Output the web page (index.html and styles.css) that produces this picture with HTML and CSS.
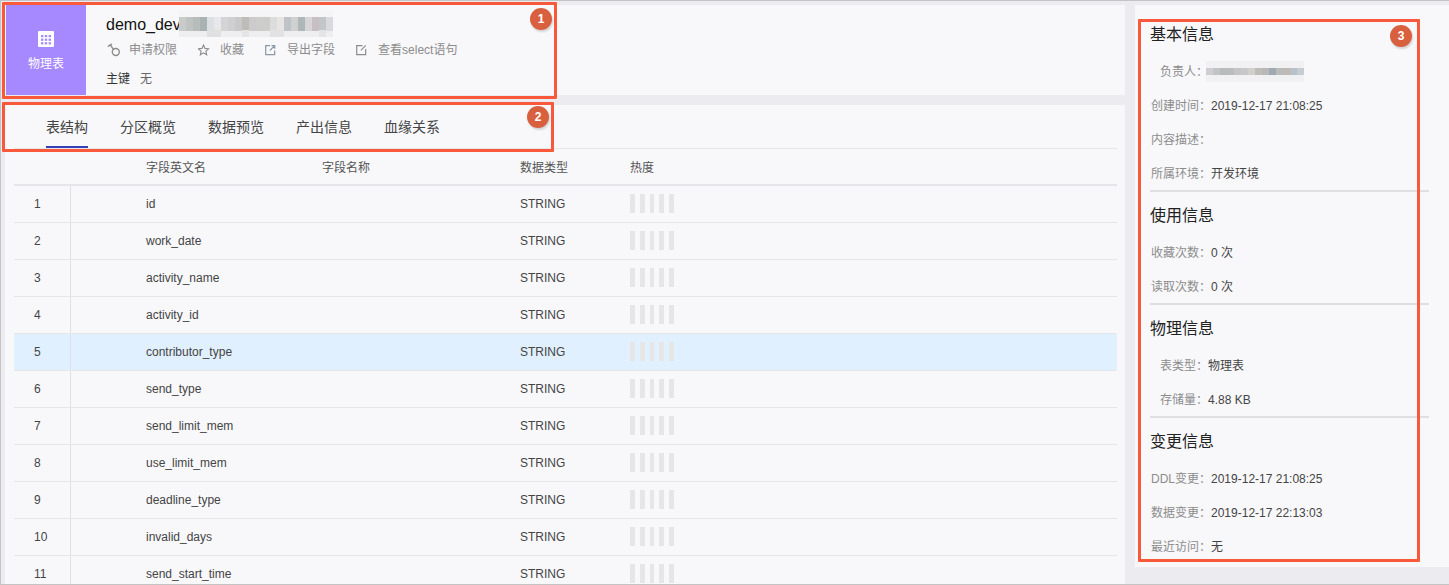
FILE: index.html
```html
<!DOCTYPE html>
<html lang="en">
<head>
  <meta charset="UTF-8" />
  <title>demo_dev</title>
  <link rel="stylesheet" href="styles.css">
</head>
<body>
  <div class="page">
    <div class="left-col">
      <header class="table-head">
        <div class="type-box">
          <svg class="type-icon" width="16" height="16" viewBox="0 0 16 16">
            <rect width="16" height="16" rx="1" fill="#fff"/>
            <g fill="#a688ff">
              <rect x="3" y="4" width="2.4" height="2.2"/><rect x="6.8" y="4" width="2.4" height="2.2"/><rect x="10.6" y="4" width="2.4" height="2.2"/>
              <rect x="3" y="7.6" width="2.4" height="2.2"/><rect x="6.8" y="7.6" width="2.4" height="2.2"/><rect x="10.6" y="7.6" width="2.4" height="2.2"/>
              <rect x="3" y="11.2" width="2.4" height="2.2"/><rect x="6.8" y="11.2" width="2.4" height="2.2"/><rect x="10.6" y="11.2" width="2.4" height="2.2"/>
            </g>
          </svg>
          <span>物理表</span>
        </div>
        <div class="head-info">
          <div class="title-row">
            <h1>demo_dev</h1>
            <!-- name is pixelated in the screenshot -->
            <svg class="mosaic mosaic-title" width="154" height="27" viewBox="0 0 154 27" shape-rendering="crispEdges">
              <rect width="154" height="27" fill="#f5f5f7"/>
              <rect y="20" width="154" height="7" fill="#eeeef0"/>
              <rect x="0" y="7" width="7" height="14" fill="#c8cbc9"/><rect x="7" y="7" width="7" height="14" fill="#bfc4c2"/>
              <rect x="14" y="7" width="7" height="14" fill="#b8bdbb"/><rect x="21" y="7" width="7" height="14" fill="#a8b2b0"/>
              <rect x="28" y="7" width="7" height="14" fill="#dde0e3"/><rect x="35" y="7" width="7" height="14" fill="#e8e8ea"/>
              <rect x="42" y="7" width="7" height="14" fill="#d4d4d6"/><rect x="49" y="7" width="7" height="14" fill="#cfcfd2"/>
              <rect x="56" y="7" width="7" height="14" fill="#c9c9cc"/><rect x="63" y="7" width="7" height="14" fill="#bdbcb8"/>
              <rect x="70" y="7" width="7" height="14" fill="#cbcbcb"/><rect x="77" y="7" width="7" height="14" fill="#cdcdcd"/>
              <rect x="84" y="7" width="7" height="14" fill="#cdcec9"/><rect x="91" y="7" width="7" height="14" fill="#dcdcdc"/>
              <rect x="98" y="7" width="7" height="14" fill="#e6e5e3"/><rect x="105" y="7" width="7" height="14" fill="#bfc3c5"/>
              <rect x="112" y="7" width="7" height="14" fill="#cfd0d0"/><rect x="119" y="7" width="7" height="14" fill="#aeb7b7"/>
              <rect x="126" y="7" width="7" height="14" fill="#d6d6d6"/><rect x="133" y="7" width="7" height="14" fill="#c9bfc3"/>
              <rect x="140" y="7" width="7" height="14" fill="#c3c6c9"/><rect x="147" y="7" width="7" height="14" fill="#d9dade"/>
              <rect x="28" y="20" width="14" height="7" fill="#e0e0e0"/><rect x="63" y="20" width="7" height="7" fill="#e4e4e2"/>
              <rect x="91" y="20" width="14" height="7" fill="#e2e2e4"/><rect x="140" y="20" width="7" height="7" fill="#e4e4e6"/>
            </svg>
          </div>
          <div class="actions">
            <a class="action">
              <svg width="14" height="14" viewBox="0 0 14 14" fill="none" stroke="#8c8c8c" stroke-width="1.4"><circle cx="8.8" cy="9" r="3.5"/><path d="M6.4 6.4 2.8 1.2M.8 3.6 5 1"/></svg>
              <span>申请权限</span>
            </a>
            <a class="action">
              <svg width="14" height="14" viewBox="0 0 14 14" fill="none" stroke="#8c8c8c" stroke-width="1.1"><path d="M5.5 2 7 5.4l3.6.4-2.7 2.4.8 3.6-3.2-1.9-3.2 1.9.8-3.6L.4 5.8 4 5.400z"/></svg>
              <span>收藏</span>
            </a>
            <a class="action">
              <svg width="14" height="14" viewBox="0 0 14 14" fill="none" stroke="#8a97a6" stroke-width="1.2"><path d="M5 2.600H.7v9h9V7.400M6.500 2.600h3.200v3.200M9.500 2.800 4.800 7.500"/></svg>
              <span>导出字段</span>
            </a>
            <a class="action">
              <svg width="14" height="14" viewBox="0 0 14 14" fill="none" stroke="#8c8c8c" stroke-width="1.2"><path d="M6.500 2.600H.7v9h9V6M9.800 2.400 4.800 7.400"/></svg>
              <span>查看select语句</span>
            </a>
          </div>
          <div class="key-row"><span>主键</span><span>无</span></div>
        </div>
      </header>

      <section class="table-body">
        <nav class="tabs">
          <a class="tab active">表结构</a>
          <a class="tab">分区概览</a>
          <a class="tab">数据预览</a>
          <a class="tab">产出信息</a>
          <a class="tab">血缘关系</a>
        </nav>
        <table class="fields">
          <colgroup>
            <col class="col-no"><col class="col-gap"><col class="col-en"><col class="col-cn"><col class="col-type"><col>
          </colgroup>
          <thead>
            <tr><th></th><th></th><th>字段英文名</th><th>字段名称</th><th>数据类型</th><th>热度</th></tr>
          </thead>
          <tbody id="rows">
            <tr><td class="no">1</td><td></td><td>id</td><td></td><td>STRING</td><td><div class="heat"><i></i><i></i><i></i><i></i><i></i></div></td></tr>
            <tr><td class="no">2</td><td></td><td>work_date</td><td></td><td>STRING</td><td><div class="heat"><i></i><i></i><i></i><i></i><i></i></div></td></tr>
            <tr><td class="no">3</td><td></td><td>activity_name</td><td></td><td>STRING</td><td><div class="heat"><i></i><i></i><i></i><i></i><i></i></div></td></tr>
            <tr><td class="no">4</td><td></td><td>activity_id</td><td></td><td>STRING</td><td><div class="heat"><i></i><i></i><i></i><i></i><i></i></div></td></tr>
            <tr class="hover"><td class="no">5</td><td></td><td>contributor_type</td><td></td><td>STRING</td><td><div class="heat"><i></i><i></i><i></i><i></i><i></i></div></td></tr>
            <tr><td class="no">6</td><td></td><td>send_type</td><td></td><td>STRING</td><td><div class="heat"><i></i><i></i><i></i><i></i><i></i></div></td></tr>
            <tr><td class="no">7</td><td></td><td>send_limit_mem</td><td></td><td>STRING</td><td><div class="heat"><i></i><i></i><i></i><i></i><i></i></div></td></tr>
            <tr><td class="no">8</td><td></td><td>use_limit_mem</td><td></td><td>STRING</td><td><div class="heat"><i></i><i></i><i></i><i></i><i></i></div></td></tr>
            <tr><td class="no">9</td><td></td><td>deadline_type</td><td></td><td>STRING</td><td><div class="heat"><i></i><i></i><i></i><i></i><i></i></div></td></tr>
            <tr><td class="no">10</td><td></td><td>invalid_days</td><td></td><td>STRING</td><td><div class="heat"><i></i><i></i><i></i><i></i><i></i></div></td></tr>
            <tr><td class="no">11</td><td></td><td>send_start_time</td><td></td><td>STRING</td><td><div class="heat"><i></i><i></i><i></i><i></i><i></i></div></td></tr>
          </tbody>
        </table>
      </section>
    </div>

    <aside class="side">
      <section class="side-group">
        <h2>基本信息</h2>
        <div class="info-row">
          <span class="info-label">负责人：</span>
          <svg class="mosaic mosaic-owner" width="98" height="21" viewBox="0 0 98 21" shape-rendering="crispEdges">
            <rect width="98" height="21" fill="#f1f1f3"/>
            <rect x="0" y="7" width="7" height="7" fill="#d0ccd0"/><rect x="7" y="7" width="7" height="7" fill="#c0c4c4"/>
            <rect x="14" y="7" width="7" height="7" fill="#b8bcbc"/><rect x="21" y="7" width="7" height="7" fill="#bcbcbc"/>
            <rect x="28" y="7" width="7" height="7" fill="#c4c4c8"/><rect x="35" y="7" width="7" height="7" fill="#c8c8c8"/>
            <rect x="42" y="7" width="7" height="7" fill="#cfcfcc"/><rect x="49" y="7" width="7" height="7" fill="#c0bcb8"/>
            <rect x="56" y="7" width="7" height="7" fill="#b8b8b8"/><rect x="63" y="7" width="7" height="7" fill="#a0a8b0"/>
            <rect x="70" y="7" width="7" height="7" fill="#b8bcbc"/><rect x="77" y="7" width="7" height="7" fill="#c0bab4"/>
            <rect x="84" y="7" width="7" height="7" fill="#b8c0c8"/><rect x="91" y="7" width="7" height="7" fill="#c8ccd0"/>
          </svg>
        </div>
        <div class="info-row"><span class="info-label">创建时间：</span><span>2019-12-17 21:08:25</span></div>
        <div class="info-row"><span class="info-label">内容描述：</span></div>
        <div class="info-row"><span class="info-label">所属环境：</span><span>开发环境</span></div>
      </section>
      <section class="side-group">
        <h2>使用信息</h2>
        <div class="info-row"><span class="info-label">收藏次数：</span><span>0 次</span></div>
        <div class="info-row"><span class="info-label">读取次数：</span><span>0 次</span></div>
      </section>
      <section class="side-group">
        <h2>物理信息</h2>
        <div class="info-row"><span class="info-label">表类型：</span><span>物理表</span></div>
        <div class="info-row"><span class="info-label">存储量：</span><span>4.88 KB</span></div>
      </section>
      <section class="side-group">
        <h2>变更信息</h2>
        <div class="info-row"><span class="info-label">DDL变更：</span><span>2019-12-17 21:08:25</span></div>
        <div class="info-row"><span class="info-label">数据变更：</span><span>2019-12-17 22:13:03</span></div>
        <div class="info-row"><span class="info-label">最近访问：</span><span>无</span></div>
      </section>
    </aside>

    <!-- callouts drawn over the screenshot -->
    <div class="callout callout-1"><b>1</b></div>
    <div class="callout callout-2"><b>2</b></div>
    <div class="callout callout-3"><b>3</b></div>
  </div>
</body>
</html>
```

FILE: styles.css
```css
html, body {
  margin: 0;
  padding: 0;
  height: 585px;
  overflow: hidden;
}
body {
  font-family: "Liberation Sans", "Noto Sans CJK SC", sans-serif;
  font-size: 12px;
  color: #444;
}
.page {
  position: relative;
  box-sizing: border-box;
  height: 585px;
  display: flex;
  gap: 10px;
  padding: 4px 0 0 4px;
  background: #ecebf0;
  border: 1px solid #c4c4c4;
  border-right: 0;
  overflow: hidden;
}

/* left column */
.left-col {
  width: 1120px;
  display: flex;
  flex-direction: column;
  gap: 10px;
}
.table-head {
  height: 90px;
  display: flex;
  background: #f8f8fb;
}
.type-box {
  width: 80px;
  margin-left: 1px;
  background: #a688ff;
  color: #fff;
  display: flex;
  flex-direction: column;
  align-items: center;
}
.type-icon {
  margin-top: 26px;
}
.type-box span {
  margin-top: 9px;
  line-height: 16px;
}
.head-info {
  padding-left: 20px;
}
.title-row {
  display: flex;
  height: 38px;
  align-items: center;
}
.title-row h1 {
  margin: 2px 0 0;
  font-size: 16px;
  font-weight: normal;
  color: #111;
}
.mosaic-title {
  margin: -1px 0 0 -2px;
}
.actions {
  display: flex;
  height: 14px;
  color: #8c8c8c;
  line-height: 14px;
}
.action {
  display: flex;
  align-items: center;
  gap: 8px;
  margin-right: 20px;
}
.action svg {
  margin-left: 1px;
}
.key-row {
  margin-top: 14px;
  line-height: 16px;
  color: #333;
}
.key-row span + span {
  margin-left: 10px;
  color: #666;
}

/* tabs + table */
.table-body {
  flex: 1;
  background: #f8f8fb;
  padding: 0 8px 0 9px;
  overflow: hidden;
}
.tabs {
  height: 43px;
  display: flex;
  gap: 32px;
  padding-left: 32px;
  border-bottom: 1px solid #e6e6ea;
}
.tab {
  font-size: 14px;
  line-height: 44px;
  color: #444;
  height: 43px;
  box-sizing: border-box;
}
.tab.active {
  border-bottom: 2px solid #3340b8;
}
.fields {
  width: 1103px;
  table-layout: fixed;
  border-collapse: collapse;
}
.col-no { width: 56px; }
.col-gap { width: 76px; }
.col-en { width: 176px; }
.col-cn { width: 198px; }
.col-type { width: 110px; }
.fields th {
  height: 35px;
  padding: 0;
  font-weight: normal;
  text-align: left;
  color: #555;
  border-bottom: 2px solid #e6e6ea;
}
.fields td {
  height: 36px;
  padding: 0;
  color: #444;
  border-bottom: 1px solid #e6e6ea;
}
.fields td.no {
  padding-left: 20px;
  border-right: 1px solid #e0e0e4;
}
.fields tr.hover td {
  background: #e1f0fe;
}
.heat {
  display: flex;
  gap: 5px;
  margin-top: -1px;
}
.heat i {
  width: 4.8px;
  height: 19px;
  background: #e6e6e6;
}

/* right column */
.side {
  width: 314px;
  height: 562px;
  box-sizing: border-box;
  padding: 6px 20px 0 15px;
  background: #f8f8fb;
}
.side-group {
  border-bottom: 2px solid #e0e0e2;
}
.side-group:last-child {
  border-bottom: 0;
}
.side-group h2 {
  box-sizing: border-box;
  margin: 0;
  font-size: 16px;
  font-weight: normal;
  line-height: 24px;
  padding-top: 12px;
  height: 43px;
  color: #222;
}
.info-row {
  display: flex;
  align-items: baseline;
  height: 34px;
  line-height: 36px;
  color: #444;
}
.info-label {
  min-width: 57px;
  margin-left: 1px;
  text-align: right;
  white-space: nowrap;
  color: #8c8c8c;
  flex-shrink: 0;
}
.mosaic-owner {
  align-self: center;
  margin-left: -2px;
}

/* red callouts */
.callout {
  position: absolute;
  box-sizing: border-box;
  border: 3px solid #f8593a;
  border-radius: 1px;
}
.callout b {
  position: absolute;
  width: 22px;
  height: 22px;
  border-radius: 50%;
  background: #d9603f;
  color: #fff;
  font-size: 12px;
  line-height: 22px;
  text-align: center;
  box-shadow: 1px 2px 2px rgba(0,0,0,0.15);
}
.callout-1 { left: 1px; top: 1px; width: 555px; height: 97px; }
.callout-1 b { right: 2px; top: 3px; }
.callout-2 { left: 1px; top: 101px; width: 552px; height: 50px; }
.callout-2 b { right: 2px; top: 1px; }
.callout-3 { left: 1137px; top: 18px; width: 282px; height: 543px; }
.callout-3 b { right: 5px; top: 3px; }
```
